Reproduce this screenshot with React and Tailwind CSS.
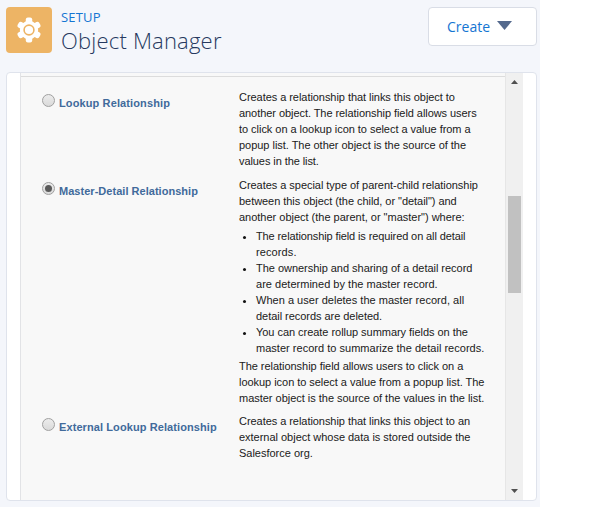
// Each line of copy is [text, letter spacing in px].
const options = [
  {
    label: ["Lookup Relationship", 0.12],
    height: "h-[88px]",
    intro: [
      ["Creates a relationship that links this object to", -0.05],
      ["another object. The relationship field allows users", -0.06],
      ["to click on a lookup icon to select a value from a", -0.04],
      ["popup list. The other object is the source of the", -0.03],
      ["values in the list.", -0.08],
    ],
  },
  {
    label: ["Master-Detail Relationship", 0.03],
    height: "h-[236px]",
    checked: true,
    intro: [
      ["Creates a special type of parent-child relationship", -0.04],
      ['between this object (the child, or "detail") and', -0.05],
      ['another object (the parent, or "master") where:', -0.01],
    ],
    bullets: [
      [["The relationship field is required on all detail", -0.11], ["records.", 0.1]],
      [["The ownership and sharing of a detail record", -0.03], ["are determined by the master record.", 0.02]],
      [["When a user deletes the master record, all", 0.02], ["detail records are deleted.", -0.04]],
      [["You can create rollup summary fields on the", -0.04], ["master record to summarize the detail records.", 0.02]],
    ],
    outro: [
      ["The relationship field allows users to click on a", -0.04],
      ["lookup icon to select a value from a popup list. The", -0.04],
      ["master object is the source of the values in the list.", -0.02],
    ],
  },
  {
    label: ["External Lookup Relationship", 0.09],
    height: "h-[64px]",
    intro: [
      ["Creates a relationship that links this object to an", -0.05],
      ["external object whose data is stored outside the", -0.02],
      ["Salesforce org.", -0.01],
    ],
  },
];

function Lines({ lines }) {
  return lines.map(([text, spacing]) => (
    <span key={text} className="block whitespace-nowrap" style={{ letterSpacing: spacing }}>
      {text}
    </span>
  ));
}

function Radio({ checked }) {
  return (
    <span className="mt-[5px] flex size-[13px] shrink-0 items-center justify-center rounded-full border border-[#a0a0a0] bg-linear-to-b from-[#ececec] to-[#dadada]">
      {checked && <span className="size-[7px] rounded-full bg-[#5a5a5a]" />}
    </span>
  );
}

function Option({ option }) {
  return (
    <div className={`flex ${option.height}`}>
      <div className="flex w-[197px] shrink-0">
        <Radio checked={option.checked} />
        <span className="mt-[6px] ml-1 text-[11px] leading-4 font-bold text-[#416a9b]">
          <Lines lines={[option.label]} />
        </span>
      </div>
      <div className="text-[11px] leading-4 text-[#202020]">
        <Lines lines={option.intro} />
        {option.bullets && (
          <ul className="mt-[3px] mb-[2px]">
            {option.bullets.map((b) => (
              <li key={b[0][0]} className="flex">
                <span className="mt-[8px] mr-[10px] ml-1 size-[3px] shrink-0 rounded-full bg-[#111]" />
                <span>
                  <Lines lines={b} />
                </span>
              </li>
            ))}
          </ul>
        )}
        {option.outro && <Lines lines={option.outro} />}
      </div>
    </div>
  );
}

function Gear() {
  return (
    <svg width="26" height="26" viewBox="0 0 26 26" fill="none">
      <g fill="#fff">
        <circle cx="13" cy="13" r="9.2" />
        <rect x="9.8" y="0.6" width="6.4" height="24.8" rx="2" />
        <rect x="9.8" y="0.6" width="6.4" height="24.8" rx="2" transform="rotate(60 13 13)" />
        <rect x="9.8" y="0.6" width="6.4" height="24.8" rx="2" transform="rotate(120 13 13)" />
      </g>
      <circle cx="13" cy="13" r="4.9" stroke="#edb465" strokeWidth="1.6" />
    </svg>
  );
}

export default function App() {
  return (
    <div className="h-[509px] w-[600px] overflow-hidden bg-white">
      <div className="flex h-[507px] w-[540px] flex-col bg-[#f4f6fb] px-[6px] pb-[6px]">
        <header className="mr-[-3px] flex h-[72px] shrink-0 items-start pt-[7px]">
          <div className="flex size-[46px] items-center justify-center rounded-[4px] bg-[#edb465]">
            <Gear />
          </div>
          <div className="ml-[9px] font-['Open_Sans',sans-serif]">
            <div className="mt-[1px] text-[13px] leading-[18px] tracking-[0.2px] text-[#1475d2]">SETUP</div>
            <div className="text-[22px] leading-[28px] font-light tracking-[0.2px] whitespace-nowrap text-[#26395f]">
              Object Manager
            </div>
          </div>
          <button className="ml-auto flex h-[39px] w-[109px] items-center rounded-[4px] border border-[#d9dde6] bg-white pl-[18px] font-['Open_Sans',sans-serif] text-[14px] text-[#1475d2]">
            Create
            <svg className="mb-[3px] ml-[7px]" width="15" height="9" viewBox="0 0 15 9">
              <path d="M0 0h15L7.5 9z" fill="#54698d" />
            </svg>
          </button>
        </header>
        <main className="flex h-[429px] w-[531px] overflow-hidden rounded-[4px] border border-[#dfe3ec] bg-white pl-[13px] font-['Liberation_Sans',Arial,sans-serif]">
          <section className="w-[485px] border-l border-[#e2e3e6] bg-[#f8f8f8]">
            <div className="h-[4px] border-b border-[#dcdcdc]" />
            <div className="pt-[12px] pl-[21px]">
              {options.map((o) => (
                <Option key={o.label[0]} option={o} />
              ))}
            </div>
          </section>
          <div className="flex w-[18px] flex-col items-center border-l border-[#e6e6e6] bg-[#f0f0f0]">
            <svg className="mt-[7px]" width="7" height="4" viewBox="0 0 7 4">
              <path d="M0 4h7L3.5 0z" fill="#505050" />
            </svg>
            <div className="mt-[112px] h-[97px] w-[13px] bg-[#c1c1c1]" />
            <svg className="mt-auto mb-[7px]" width="7" height="4" viewBox="0 0 7 4">
              <path d="M0 0h7L3.5 4z" fill="#505050" />
            </svg>
          </div>
        </main>
      </div>
    </div>
  );
}
